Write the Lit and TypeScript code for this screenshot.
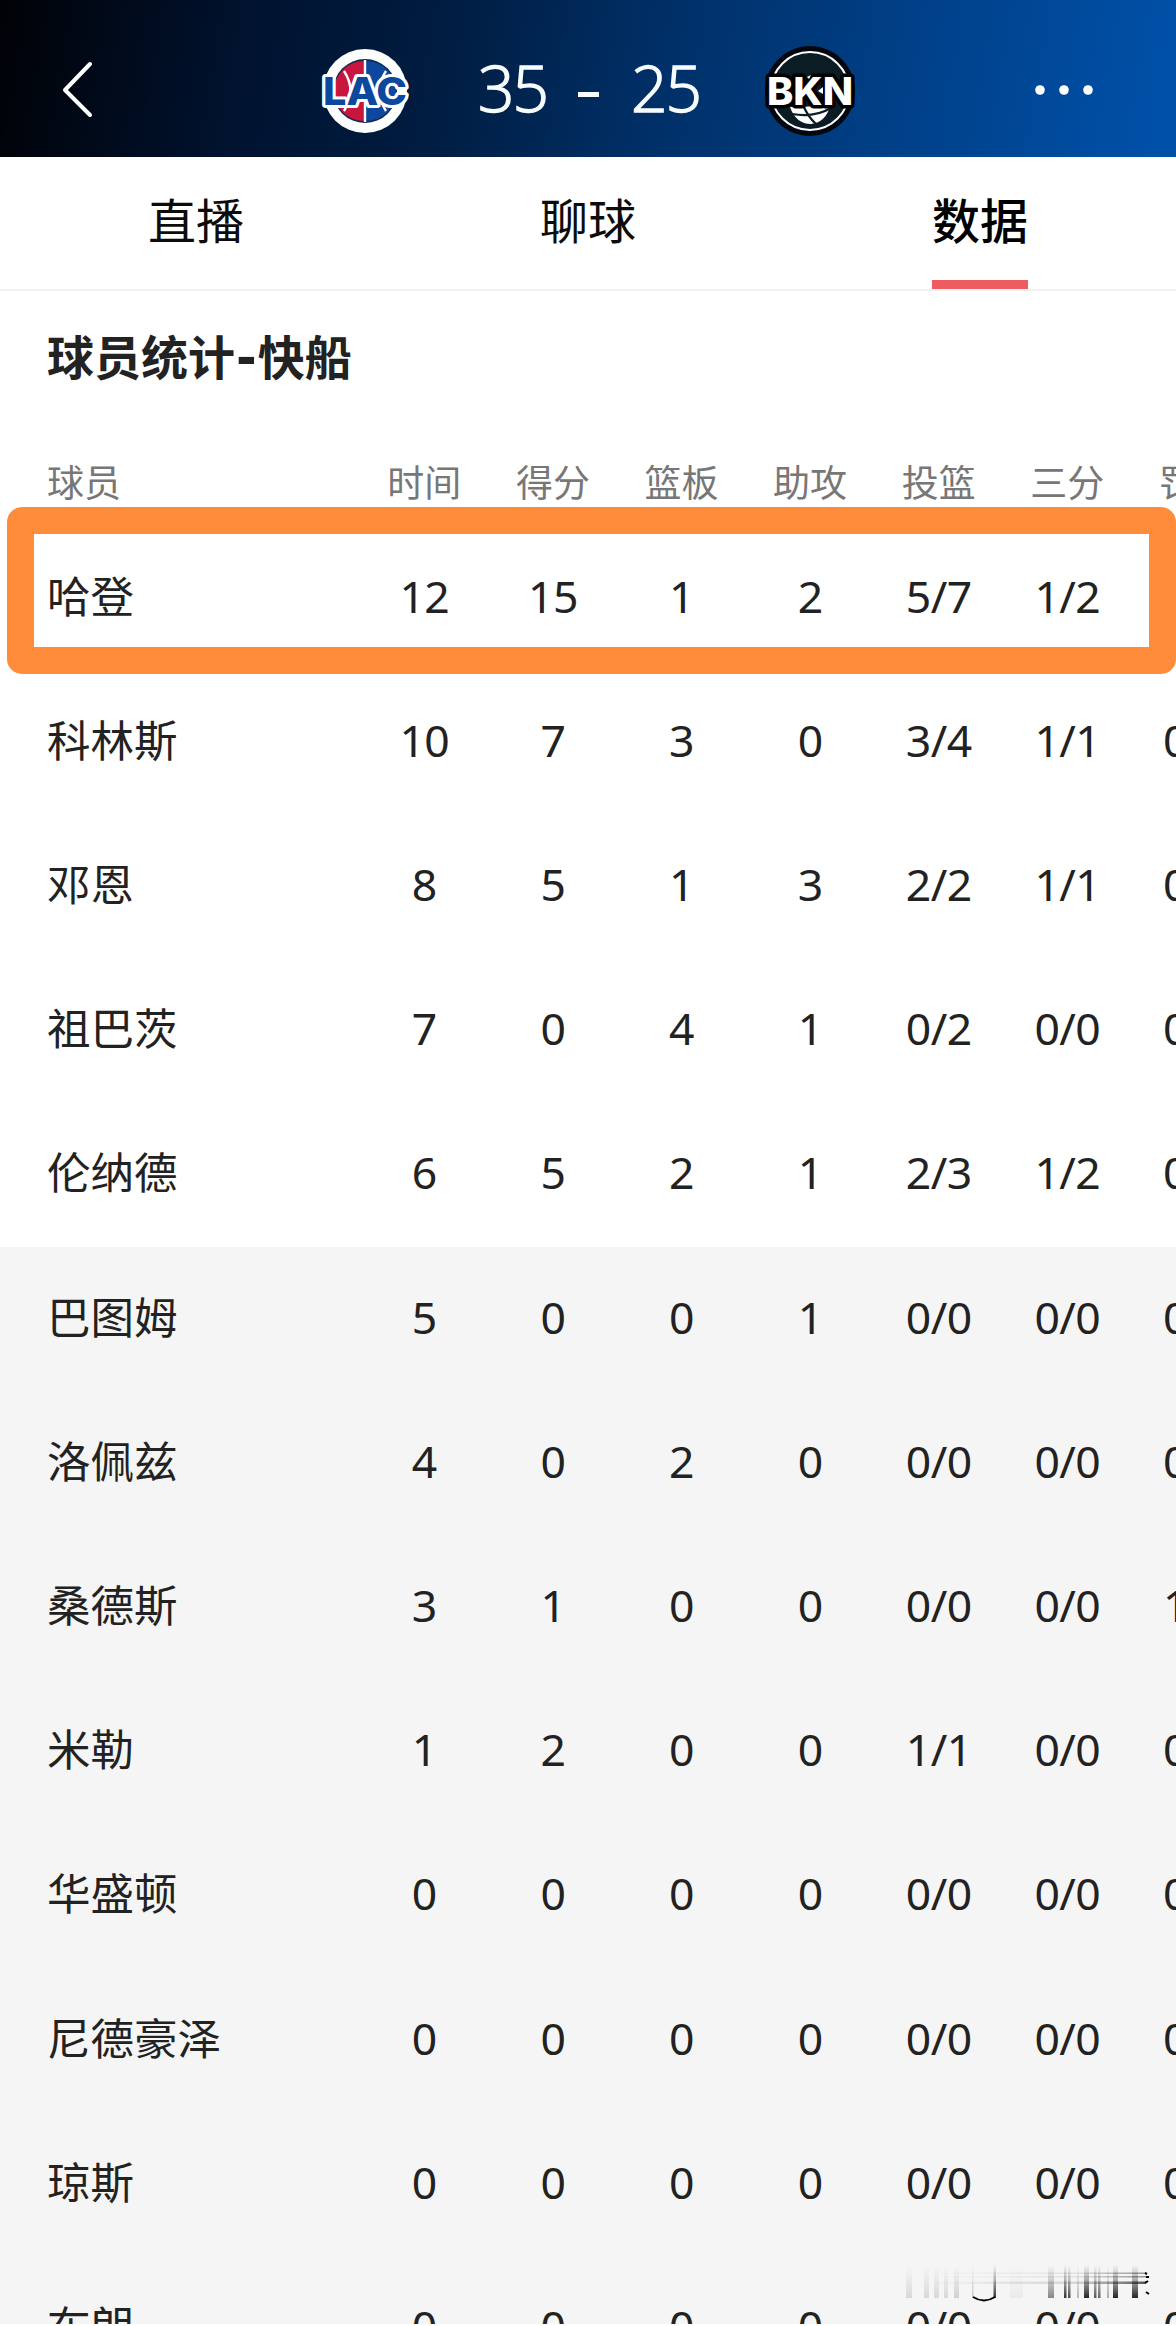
import { LitElement, html, svg, css } from "lit";
import { customElement, property } from "lit/decorators.js";
import { classMap } from "lit/directives/class-map.js";

interface Player {
  name: string;
  stats: string[];
}

const COLUMNS = ["时间", "得分", "篮板", "助攻", "投篮", "三分", "罚球"];

const STARTERS: Player[] = [
  { name: "哈登", stats: ["12", "15", "1", "2", "5/7", "1/2", ""] },
  { name: "科林斯", stats: ["10", "7", "3", "0", "3/4", "1/1", "0/0"] },
  { name: "邓恩", stats: ["8", "5", "1", "3", "2/2", "1/1", "0/0"] },
  { name: "祖巴茨", stats: ["7", "0", "4", "1", "0/2", "0/0", "0/0"] },
  { name: "伦纳德", stats: ["6", "5", "2", "1", "2/3", "1/2", "0/0"] },
];

const BENCH: Player[] = [
  { name: "巴图姆", stats: ["5", "0", "0", "1", "0/0", "0/0", "0/0"] },
  { name: "洛佩兹", stats: ["4", "0", "2", "0", "0/0", "0/0", "0/0"] },
  { name: "桑德斯", stats: ["3", "1", "0", "0", "0/0", "0/0", "1/2"] },
  { name: "米勒", stats: ["1", "2", "0", "0", "1/1", "0/0", "0/0"] },
  { name: "华盛顿", stats: ["0", "0", "0", "0", "0/0", "0/0", "0/0"] },
  { name: "尼德豪泽", stats: ["0", "0", "0", "0", "0/0", "0/0", "0/0"] },
  { name: "琼斯", stats: ["0", "0", "0", "0", "0/0", "0/0", "0/0"] },
  { name: "布朗", stats: ["0", "0", "0", "0", "0/0", "0/0", "0/0"] },
];

@customElement("score-header")
class ScoreHeader extends LitElement {
  static styles = css`
    :host {
      display: block;
    }
    .bar {
      box-sizing: border-box;
      height: 157px;
      padding: 24px 84px 0 61px;
      display: grid;
      grid-template-columns: 256px 96px 348px 96px 1fr;
      align-items: center;
      background: linear-gradient(100deg, #000206 0%, #00122e 20%, #001d42 38%, #002f66 55%, #003e84 74%, #0050a8 98%);
      color: #f7fcff;
    }
    svg {
      display: block;
      overflow: visible;
    }
    .score {
      display: grid;
      grid-template-columns: 68px 1fr 68px;
      padding: 0 62px 0 65px;
      font: 300 64px/90px "Open Sans", "Noto Sans", sans-serif;
      letter-spacing: -2px;
      -webkit-text-stroke: 1.4px #f7fcff;
      text-align: center;
      margin-top: -6px;
    }
    .dash {
      width: 21px;
      height: 4.5px;
      background: #f7fcff;
      align-self: center;
      justify-self: center;
      margin-top: 14px;
    }
    .more {
      justify-self: end;
    }
    .mark {
      font-family: Inter, "Liberation Sans", sans-serif;
      font-weight: 800;
      paint-order: stroke;
      stroke-linejoin: round;
    }
  `;

  render() {
    return html`
      <header class="bar">
        <svg width="34" height="60" viewBox="0 0 34 60" fill="none" stroke="#fff" stroke-width="4" stroke-linecap="round" stroke-linejoin="round">
          <path d="M29 3 L4 29 L29 54" />
        </svg>
        <svg width="96" height="96" viewBox="-48 -48 96 96">
          <circle r="42" fill="#fdffff" />
          <circle r="32" fill="#14284f" />
          <path d="M-1 -30 A30 30 0 0 0 -1 30 Z" fill="#c8163c" />
          <path d="M1 -30 A30 30 0 0 1 1 30 Z" fill="#0b489e" />
          <path d="M0 -31 V31 M-21 -20 Q-8 0 -21 20 M21 -20 Q8 0 21 20" fill="none" stroke="#fff" stroke-width="2.4" />
          <text class="mark" x="0" y="14" text-anchor="middle" font-size="38.5" textLength="84" lengthAdjust="spacingAndGlyphs" fill="#0b489e" stroke="#fff" stroke-width="6">LAC</text>
        </svg>
        <div class="score">
          <span>35</span><span class="dash"></span><span>25</span>
        </div>
        <svg width="96" height="96" viewBox="-49 -48 96 96">
          <circle r="45" fill="#03070d" />
          <circle r="39" fill="#0b1c24" stroke="#fff" stroke-width="2" />
          <path d="M-20 16 Q-14 33 1 33 Q16 31 20 15 Z" fill="#fff" />
          <path d="M-18 23 Q4 27 21 17 M-7 14 Q-2 26 6 33" fill="none" stroke="#0b1c24" stroke-width="2.2" />
          <text class="mark" x="0" y="14" text-anchor="middle" font-size="38" textLength="86" lengthAdjust="spacingAndGlyphs" fill="#fff" stroke="#000" stroke-width="7">BKN</text>
          <path d="M-3 -14 L1 -16 L-1 -12 Z M8 0 L13 -4 V3 Z" fill="#fff" />
        </svg>
        <svg class="more" width="60" height="12" viewBox="0 0 60 12" fill="#fff">
          <circle cx="8" cy="5" r="4.8" /><circle cx="32" cy="5" r="4.8" /><circle cx="56" cy="5" r="4.8" />
        </svg>
      </header>
    `;
  }
}

@customElement("tab-strip")
class TabStrip extends LitElement {
  @property({ type: Number }) active = 2;

  static styles = css`
    :host {
      display: block;
    }
    .tabs {
      box-sizing: border-box;
      height: 134px;
      border-bottom: 2px solid #f2f2f2;
      display: grid;
      grid-template-columns: repeat(3, 392px);
      justify-items: center;
      font: 400 48px/123px "Noto Sans CJK SC", sans-serif;
      color: #0c0c0c;
    }
    .tab {
      box-sizing: border-box;
      height: 132px;
      border-bottom: 9px solid transparent;
    }
    .on {
      border-bottom-color: #ee5c60;
      font-weight: 500;
      color: #000;
    }
  `;

  render() {
    return html`<nav class="tabs">
      ${["直播", "聊球", "数据"].map(
        (t, i) => html`<div class=${classMap({ tab: true, on: i === this.active })}>${t}</div>`
      )}
    </nav>`;
  }
}

/* Smeared watermark strip: [x, width, opacity] of each vertical streak. */
const STREAKS: [number, number, number][] = [
  [2, 6, 0.12], [20, 5, 0.12], [30, 5, 0.12], [40, 4, 0.12], [50, 5, 0.15],
  [68, 1.5, 0.2], [89.5, 2.5, 0.8], [106, 13, 0.04],
  [144, 6, 0.45], [160, 2.5, 0.8], [164, 2.5, 0.7], [173, 2, 0.25], [180, 5, 0.85],
  [190, 2.5, 0.65], [194, 2.5, 0.6], [203, 2, 0.3], [209, 5, 0.85], [228, 6, 0.85],
];

@customElement("app-root")
class AppRoot extends LitElement {
  static styles = css`
    :host {
      display: block;
    }
    .page {
      position: relative;
      width: 1176px;
      height: 2326px;
      overflow: hidden;
      background: #fff;
      display: flex;
      flex-direction: column;
    }
    .title {
      margin: 0;
      height: 132px;
      padding-left: 47px;
      font: 700 47px/127px "Noto Sans CJK SC", sans-serif;
      color: #222;
      white-space: nowrap;
    }
    .hyphen {
      font: 700 50px/1 "DejaVu Sans", sans-serif;
      margin: 0 1px;
    }
    .row {
      display: grid;
      grid-template-columns: 313px repeat(7, 128.6px);
      height: 144.2px;
      padding-left: 47px;
      align-items: center;
      color: #222;
      white-space: nowrap;
    }
    .head {
      box-sizing: border-box;
      height: 100.6px;
      padding-top: 31px;
      font: 400 37px/54px "Noto Sans CJK SC", sans-serif;
      color: #777;
      align-items: start;
    }
    .head,
    .cell {
      text-align: center;
    }
    .head .who {
      text-align: left;
    }
    .name {
      font: 400 43.5px/64px "Noto Sans CJK SC", sans-serif;
      padding-bottom: 2px;
    }
    .cell {
      font: 400 44.5px/64px "Noto Sans", "Open Sans", sans-serif;
      letter-spacing: -0.6px;
    }
    .starters {
      padding-bottom: 2px;
    }
    .bench {
      background: #f5f5f5;
      height: 1077px;
      overflow: hidden;
    }
    .bench .row:first-child {
      margin-top: -2px;
    }
    .marker {
      position: absolute;
      box-sizing: border-box;
      left: 7px;
      top: 507px;
      width: 1169px;
      height: 167px;
      border: 27px solid #ff8c3a;
      border-radius: 15px;
    }
    .smear {
      position: absolute;
      left: 904px;
      top: 2260px;
    }
  `;

  private row(p: Player) {
    return html`<div class="row">
      <span class="name">${p.name}</span>
      ${p.stats.map((s) => html`<span class="cell">${s}</span>`)}
    </div>`;
  }

  render() {
    return html`
      <main class="page">
        <score-header></score-header>
        <tab-strip .active=${2}></tab-strip>
        <h1 class="title">球员统计<span class="hyphen">-</span>快船</h1>
        <div class="row head">
          <span class="who">球员</span>
          ${COLUMNS.map((c) => html`<span>${c}</span>`)}
        </div>
        <section class="starters">${STARTERS.map((p) => this.row(p))}</section>
        <section class="bench">${BENCH.map((p) => this.row(p))}</section>
        <div class="marker"></div>
        <svg class="smear" width="248" height="46" viewBox="0 0 248 46">
          <defs>
            <linearGradient id="v" x1="0" y1="0" x2="0" y2="1">
              <stop offset="0" stop-color="#000" stop-opacity="0" />
              <stop offset=".4" stop-color="#000" stop-opacity=".3" />
              <stop offset="1" stop-color="#000" />
            </linearGradient>
            <linearGradient id="h" x1="0" y1="0" x2="1" y2="0">
              <stop offset="0" stop-color="#000" stop-opacity="0" />
              <stop offset=".7" stop-color="#000" stop-opacity=".2" />
              <stop offset="1" stop-color="#000" />
            </linearGradient>
            <filter id="soft" x="-5%" y="-5%" width="110%" height="110%">
              <feGaussianBlur stdDeviation=".7 .2" />
            </filter>
          </defs>
          <g filter="url(#soft)">
            ${STREAKS.map(([x, w, o]) => svg`<rect x=${x} y="5" width=${w} height="33" fill="url(#v)" opacity=${o} />`)}
          </g>
          <path d="M69 37 Q80 44 91 37" fill="none" stroke="#000" stroke-width="1.8" />
          <rect x="20" y="12.5" width="222" height="1.5" fill="url(#h)" opacity=".4" />
          <rect x="20" y="16" width="222" height="1.5" fill="url(#h)" opacity=".4" />
          <rect x="20" y="21.5" width="222" height="2.5" fill="url(#h)" opacity=".65" />
          <path d="M241 13 l2 1 M242 17 h3 M241 23 l3 -2 M242 32 l3 2" stroke="#000" stroke-width="2" fill="none" />
        </svg>
      </main>
    `;
  }
}
